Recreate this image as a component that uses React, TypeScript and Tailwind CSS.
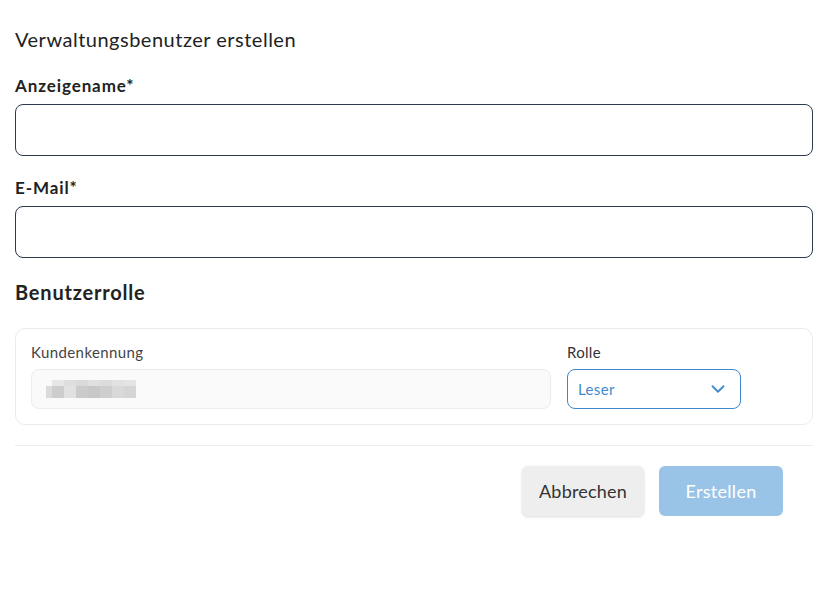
import { ChevronDown } from "lucide-react";

const font = { fontFamily: "Lato, 'Open Sans', sans-serif" };

function MaskedId() {
  // pixelated placeholder for a hidden customer id
  return (
    <div className="flex flex-col">
      <div className="flex pl-[6px]">
        <div className="w-[12px] h-[6px] bg-[#e6e6e6]" />
        <div className="w-[12px] h-[6px] bg-[#dedede]" />
        <div className="w-[12px] h-[6px] bg-[#dadada]" />
        <div className="w-[12px] h-[6px] bg-[#e0e0e0]" />
        <div className="w-[12px] h-[6px] bg-[#dcdcdc]" />
        <div className="w-[12px] h-[6px] bg-[#e2e2e2]" />
        <div className="w-[12px] h-[6px] bg-[#e4e4e4]" />
      </div>
      <div className="flex">
        <div className="w-[6px] h-[12px] bg-[#dbdbdb]" />
        <div className="w-[12px] h-[12px] bg-[#cdcdcd]" />
        <div className="w-[12px] h-[12px] bg-[#e1e1e1]" />
        <div className="w-[12px] h-[12px] bg-[#cbcbcb]" />
        <div className="w-[12px] h-[12px] bg-[#c8c8c8]" />
        <div className="w-[12px] h-[12px] bg-[#cecece]" />
        <div className="w-[12px] h-[12px] bg-[#d9d9d9]" />
        <div className="w-[12px] h-[12px] bg-[#d5d5d5]" />
      </div>
    </div>
  );
}

export default function App() {
  return (
    <div className="w-[828px] h-[601px] bg-white text-[#222]" style={font}>
      <div className="px-[15px] pt-[25px]">
        <h1 className="text-[20px] leading-[28px] font-normal tracking-[0.5px] text-[#222]">
          Verwaltungsbenutzer erstellen
        </h1>

        <label className="block mt-[21px] text-[17px] leading-[24px] font-bold tracking-[0.9px] text-[#222]">
          Anzeigename*
        </label>
        <div className="mt-[6px] h-[52px] rounded-[8px] border border-[#2b3a4e] bg-white" />

        <label className="block mt-[20px] text-[17px] leading-[24px] font-bold tracking-[0.9px] text-[#222]">
          E-Mail*
        </label>
        <div className="mt-[6px] h-[52px] rounded-[8px] border border-[#2b3a4e] bg-white" />

        <h2 className="mt-[20px] text-[20px] leading-[28px] font-bold tracking-[0.8px] text-[#222]">
          Benutzerrolle
        </h2>

        <div className="mt-[22px] rounded-[10px] border border-[#ebebeb] px-[15px] pt-[12px] pb-[15px] flex gap-[16px]">
          <div className="w-[520px]">
            <div className="text-[15px] leading-[22px] font-normal tracking-[0.4px] text-[#444]">Kundenkennung</div>
            <div className="mt-[6px] h-[40px] rounded-[8px] border border-[#ececec] bg-[#fafafa] flex items-center pl-[14px]">
              <MaskedId />
            </div>
          </div>
          <div className="w-[174px]">
            <div className="text-[15px] leading-[22px] font-normal tracking-[0.3px] text-[#333]">Rolle</div>
            <div className="mt-[6px] h-[40px] rounded-[8px] border border-[#3d88cc] bg-white flex items-center justify-between pl-[10px] pr-[11px]">
              <span className="text-[15px] tracking-[0.4px] text-[#3f8ad0]">Leser</span>
              <ChevronDown className="w-[22px] h-[22px] text-[#3f8ad0]" strokeWidth={2} />
            </div>
          </div>
        </div>

        <div className="mt-[20px] border-t border-[#ececec]" />

        <div className="mt-[20px] flex justify-end gap-[15px] pr-[30px]">
          <button className="w-[122px] h-[50px] rounded-[6px] bg-[#eeeeee] shadow-[0_1px_3px_rgba(0,0,0,0.15)] text-[18px] font-normal tracking-[0.2px] text-[#333]">
            Abbrechen
          </button>
          <button className="w-[124px] h-[50px] rounded-[6px] bg-[#9ac4e7] text-[18px] tracking-[0.3px] text-white">
            Erstellen
          </button>
        </div>
      </div>
    </div>
  );
}
